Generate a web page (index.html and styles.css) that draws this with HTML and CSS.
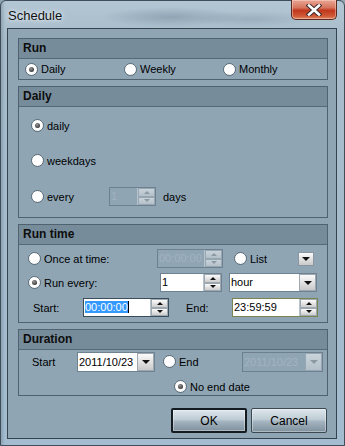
FILE: index.html
```html
<!DOCTYPE html>
<html>
<head>
	<title>Schedule</title>
	<link rel="stylesheet" href="styles.css">
</head>
<body>
	<div class="window">
		<div class="titlebar">
			<span class="title">Schedule</span>
			<div class="close">
				<svg width="18" height="12" viewBox="0 0 18 12">
					<path d="M4 1.5 L14 10.5 M14 1.5 L4 10.5" stroke="#3a2a2a" stroke-width="4.5" stroke-linecap="square"/>
					<path d="M4 1.5 L14 10.5 M14 1.5 L4 10.5" stroke="#ffffff" stroke-width="2.6" stroke-linecap="square"/>
				</svg>
			</div>
		</div>

		<div class="client">
			<div class="group">
				<div class="group-head">Run</div>
				<div class="group-body run-body">
					<label class="opt w-run"><span class="radio checked"></span>Daily</label>
					<label class="opt w-run"><span class="radio"></span>Weekly</label>
					<label class="opt"><span class="radio"></span>Monthly</label>
				</div>
			</div>

			<div class="group">
				<div class="group-head">Daily</div>
				<div class="group-body daily-body">
					<label class="opt"><span class="radio checked"></span>daily</label>
					<label class="opt row-weekdays"><span class="radio"></span>weekdays</label>
					<div class="row row-every">
						<label class="opt w-every"><span class="radio"></span>every</label>
						<div class="spin disabled w-days">
							<span class="spin-text">1</span>
							<div class="spin-btns"><span class="up"></span><span class="down"></span></div>
						</div>
						<span class="days">days</span>
					</div>
				</div>
			</div>

			<div class="group">
				<div class="group-head">Run time</div>
				<div class="group-body time-body">
					<div class="row">
						<label class="opt w-once"><span class="radio"></span>Once at time:</label>
						<div class="spin disabled w-once-field">
							<span class="spin-text">00:00:00</span>
							<div class="spin-btns"><span class="up"></span><span class="down"></span></div>
						</div>
						<label class="opt list-opt"><span class="radio"></span>List</label>
						<span class="drop-btn list-btn"></span>
					</div>
					<div class="row">
						<label class="opt w-every-run"><span class="radio checked"></span>Run every:</label>
						<div class="spin w-count">
							<span class="spin-text">1</span>
							<div class="spin-btns"><span class="up"></span><span class="down"></span></div>
						</div>
						<div class="combo w-unit">
							<span class="combo-text">hour</span>
							<span class="drop-btn"></span>
						</div>
					</div>
					<div class="row row-range">
						<span class="lbl w-start">Start:</span>
						<div class="spin w-range focus-start">
							<span class="spin-text"><span class="sel">00:00:00</span></span>
							<div class="spin-btns"><span class="up"></span><span class="down"></span></div>
						</div>
						<span class="lbl w-end">End:</span>
						<div class="spin w-range hover-end">
							<span class="spin-text">23:59:59</span>
							<div class="spin-btns"><span class="up"></span><span class="down"></span></div>
						</div>
					</div>
				</div>
			</div>

			<div class="group">
				<div class="group-head">Duration</div>
				<div class="group-body duration-body">
					<div class="row">
						<span class="lbl w-dstart">Start</span>
						<div class="combo w-date">
							<span class="combo-text">2011/10/23</span>
							<span class="drop-btn"></span>
						</div>
						<label class="opt end-opt"><span class="radio"></span>End</label>
						<div class="combo disabled w-enddate">
							<span class="combo-text">2011/10/23</span>
							<span class="drop-btn"></span>
						</div>
					</div>
					<label class="opt no-end"><span class="radio checked"></span>No end date</label>
				</div>
			</div>

			<div class="buttons">
				<button class="button default">OK</button>
				<button class="button">Cancel</button>
			</div>
		</div>
	</div>
</body>
</html>
```

FILE: styles.css
```css
body {
	margin: 0;
	padding: 0;
	font-family: "Liberation Sans", Arial, sans-serif;
	font-size: 11px;
	color: #000;
	background-color: #8fa5b4;
}

.window {
	width: 345px;
	height: 446px;
	box-sizing: border-box;
	border: 1px solid #3e4d58;
	border-radius: 6px 6px 0 0;
	display: flex;
	flex-direction: column;
	background:
		linear-gradient(90deg, rgba(60, 80, 100, 0.25) 0, rgba(60, 80, 100, 0) 4px),
		linear-gradient(180deg, #b3c6d3 0%, #a8bccb 8%, #a3bccf 100%);
}

.titlebar {
	height: 27px;
	display: flex;
	justify-content: space-between;
	align-items: flex-start;
	background:
		radial-gradient(ellipse 70px 10px at 170px 16px, rgba(110, 130, 150, 0.45), rgba(110, 130, 150, 0)),
		radial-gradient(ellipse 60px 8px at 250px 18px, rgba(120, 140, 160, 0.35), rgba(120, 140, 160, 0));
}

.title {
	font-family: "Liberation Sans", Arial, sans-serif;
	font-size: 13px;
	color: #111;
	padding: 7px 0 0 7px;
	text-shadow: 0 0 6px #e8f0f6, 0 0 3px #e8f0f6;
}

.close {
	width: 46px;
	height: 20px;
	margin: -1px 7px 0 0;
	box-sizing: border-box;
	border: 1px solid #5a2a22;
	border-top: none;
	border-radius: 0 0 5px 5px;
	background: linear-gradient(180deg, #e9a795 0%, #d7755e 40%, #c0381d 55%, #cf5a38 85%, #e08a60 100%);
	box-shadow: inset 0 0 0 1px rgba(255, 220, 210, 0.45);
	display: flex;
	align-items: center;
	justify-content: center;
}

.client {
	flex: 1;
	margin: 0 7px 6px 6px;
	border: 1px solid #34444f;
	background-color: #8fa5b4;
	padding: 9px 8px 0 10px;
	display: flex;
	flex-direction: column;
}

/* group boxes */
.group {
	border: 1px solid #4f6270;
	margin-bottom: 6px;
}

.group-head {
	height: 19px;
	line-height: 19px;
	border-bottom: 1px solid #56697a;
	background-color: #778c9b;
	font-size: 12px;
	font-weight: bold;
	color: #0d0d0d;
	padding-left: 4px;
}

.group-body {
	display: flex;
	flex-direction: column;
}

.run-body {
	height: 20px;
	flex-direction: row;
	align-items: center;
	padding-left: 6px;
}

.daily-body {
	height: 110px;
	box-sizing: border-box;
	padding: 12px 0 0 12px;
	align-items: flex-start;
}

.time-body {
	height: 77px;
	box-sizing: border-box;
	padding: 4px 0 0 9px;
}

.duration-body {
	height: 45px;
	box-sizing: border-box;
	padding: 2px 0 0 12px;
}

.row {
	display: flex;
	align-items: center;
	height: 19px;
	margin-bottom: 5px;
}

/* radio options */
.opt {
	display: flex;
	align-items: center;
	gap: 3px;
	white-space: nowrap;
}

.radio {
	width: 13px;
	height: 13px;
	box-sizing: border-box;
	border-radius: 50%;
	border: 1px solid #5d6c77;
	background: radial-gradient(circle at 40% 35%, #ffffff 55%, #e2e6ea 100%);
	display: flex;
	align-items: center;
	justify-content: center;
	flex-shrink: 0;
}

.radio.checked::after {
	content: "";
	width: 5px;
	height: 5px;
	border-radius: 50%;
	background: radial-gradient(circle at 40% 35%, #9a9a9a 0%, #3c3c3c 70%);
}

.w-run { width: 99px; }

.row-weekdays { margin-top: 22px; }

.row-every {
	margin-top: 20px;
	margin-bottom: 0;
}

.w-every { width: 78px; }
.days { margin-left: 7px; }

.w-once { width: 129px; }
.list-opt { margin-left: 11px; }
.list-btn { margin: 0 13px 0 auto; height: 14px; }

.w-every-run { width: 132px; }

.row-range { margin-top: 1px; }
.lbl { white-space: nowrap; }
.w-start { width: 50px; padding-left: 5px; }
.w-end { width: 46px; padding-left: 17px; }

.w-dstart { width: 45px; padding-left: 1px; }
.end-opt { margin-left: 8px; width: 74px; }

.no-end {
	margin: 4px 0 0 143px;
}

/* spin boxes and combos */
.spin, .combo {
	height: 19px;
	box-sizing: border-box;
	border: 1px solid #6f8291;
	background-color: #fff;
	display: flex;
	align-items: stretch;
}

.spin-text, .combo-text {
	flex: 1;
	min-width: 0;
	line-height: 17px;
	padding-left: 1px;
	overflow: hidden;
	white-space: nowrap;
	font-size: 11px;
}

.spin-btns {
	width: 17px;
	display: flex;
	flex-direction: column;
	border-left: 1px solid #b9c3ca;
}

.spin-btns span {
	flex: 1;
	display: flex;
	align-items: center;
	justify-content: center;
	background: linear-gradient(180deg, #fbfbfb 0%, #e4e4e4 50%, #cdcdcd 100%);
	border: 1px solid #9ea8b0;
}

.spin-btns .up::after {
	content: "";
	border-left: 3px solid transparent;
	border-right: 3px solid transparent;
	border-bottom: 3px solid #111;
}

.spin-btns .down::after {
	content: "";
	border-left: 3px solid transparent;
	border-right: 3px solid transparent;
	border-top: 3px solid #111;
}

.drop-btn {
	width: 17px;
	flex-shrink: 0;
	box-sizing: border-box;
	border: 1px solid #9ea8b0;
	background: linear-gradient(180deg, #fbfbfb 0%, #e2e2e2 50%, #c9c9c9 100%);
	display: flex;
	align-items: center;
	justify-content: center;
}

.drop-btn::after {
	content: "";
	border-left: 4px solid transparent;
	border-right: 4px solid transparent;
	border-top: 4px solid #111;
}

.list-btn {
	width: 16px;
	border-color: #8a969f;
}

.disabled {
	background-color: #8fa5b4;
	border-color: #6c8090;
}

.disabled .spin-text, .disabled .combo-text {
	color: #a3b3bf;
}

.disabled .spin-btns span, .disabled .drop-btn {
	background: linear-gradient(180deg, #c9d3da 0%, #b4c0c9 100%);
	border-color: #96a6b2;
}

.disabled .spin-btns .up::after { border-bottom-color: #8b99a4; }
.disabled .spin-btns .down::after { border-top-color: #8b99a4; }
.disabled .drop-btn::after { border-top-color: #8b99a4; }

.w-days { width: 47px; }
.w-once-field { width: 66px; }
.w-count { width: 62px; }
.w-unit { width: 88px; margin-left: 7px; }
.w-range { width: 86px; }
.w-date { width: 78px; height: 20px; }
.w-enddate { width: 81px; height: 20px; margin-left: 5px; }

.w-date .combo-text, .w-enddate .combo-text { line-height: 18px; }

.focus-start { border-color: #3b4d5a; }
.hover-end { border-color: #7a8450; }

.sel {
	background-color: #3399ff;
	color: #fff;
	border-right: 1px solid #000;
}

/* dialog buttons */
.buttons {
	display: flex;
	justify-content: flex-end;
	gap: 4px;
	margin-top: 6px;
	padding-right: 1px;
}

.button {
	width: 76px;
	height: 25px;
	box-sizing: border-box;
	font-family: "Liberation Sans", Arial, sans-serif;
	font-size: 12px;
	color: #000;
	border: 1px solid #3a4852;
	border-radius: 2px;
	background: linear-gradient(180deg, #dde6ec 0%, #bfccd5 45%, #a3b3bf 55%, #7f919e 100%);
	box-shadow: inset 0 0 0 1px rgba(255, 255, 255, 0.35);
	padding: 0;
}

.button.default {
	border: 2px solid #141c22;
}
```
